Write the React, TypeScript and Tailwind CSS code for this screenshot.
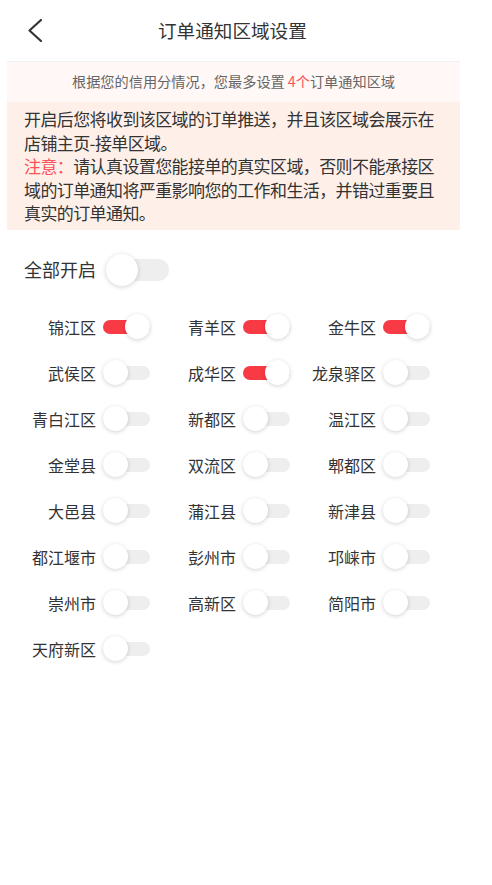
const FONT = '"Noto Sans CJK SC", "Noto Sans", sans-serif'

type Area = { name: string; on: boolean }

const AREAS: Area[] = [
  { name: '锦江区', on: true },
  { name: '青羊区', on: true },
  { name: '金牛区', on: true },
  { name: '武侯区', on: false },
  { name: '成华区', on: true },
  { name: '龙泉驿区', on: false },
  { name: '青白江区', on: false },
  { name: '新都区', on: false },
  { name: '温江区', on: false },
  { name: '金堂县', on: false },
  { name: '双流区', on: false },
  { name: '郫都区', on: false },
  { name: '大邑县', on: false },
  { name: '蒲江县', on: false },
  { name: '新津县', on: false },
  { name: '都江堰市', on: false },
  { name: '彭州市', on: false },
  { name: '邛崃市', on: false },
  { name: '崇州市', on: false },
  { name: '高新区', on: false },
  { name: '简阳市', on: false },
  { name: '天府新区', on: false },
]

function SmallSwitch({ on }: { on: boolean }) {
  return (
    <div className="relative flex h-[25px] w-[47px] items-center">
      <div className={`h-[14px] w-full rounded-full ${on ? 'bg-[#f83a45]' : 'bg-[#eeeeee]'}`} />
      <div
        className={`absolute top-0 h-[25px] w-[25px] rounded-full bg-white shadow-[0_1px_4px_rgba(0,0,0,0.18)] ${
          on ? 'right-0' : 'left-0'
        }`}
      />
    </div>
  )
}

export default function App() {
  return (
    <div className="h-[885px] w-[492px] bg-white text-[#333]" style={{ fontFamily: FONT }}>
      <div className="flex h-[61px] items-center">
        <svg width="20" height="28" viewBox="0 0 20 28" className="ml-[25px]">
          <path d="M16 3 L4.5 13.5 L16 24" fill="none" stroke="#333" strokeWidth="2.2" strokeLinecap="round" strokeLinejoin="round" />
        </svg>
        <div className="ml-[113px] text-[18.6px] leading-none text-[#333]">订单通知区域设置</div>
      </div>

      <div className="ml-[7px] w-[453px]">
        <div className="flex h-[41px] items-center justify-center border-t border-[#f0f0f0] bg-[#fff8f6] text-[14.2px] text-[#666]">
          根据您的信用分情况，您最多设置<span className="ml-[3px] text-[#fb5158]">4个</span>订单通知区域
        </div>
        <div className="bg-[#fef0e9] px-[17px] py-[5px] text-[17px] leading-[23.5px] tracking-[-0.6px] text-[#333]">
          <p>开启后您将收到该区域的订单推送，并且该区域会展示在店铺主页-接单区域。</p>
          <p>
            <span className="text-[#fb5158]">注意：</span>请认真设置您能接单的真实区域，否则不能承接区域的订单通知将严重影响您的工作和生活，并错过重要且真实的订单通知。
          </p>
        </div>
      </div>

      <div className="mt-[17px] flex h-[46px] items-center pl-[24px]">
        <span className="text-[18px] text-[#333]">全部开启</span>
        <div className="relative ml-[10px] flex h-[32px] w-[63px] items-center">
          <div className="ml-[3px] h-[22px] w-[60px] rounded-full bg-[#eeeeee]" />
          <div className="absolute left-0 top-0 h-[32px] w-[32px] rounded-full bg-white shadow-[0_1px_5px_rgba(0,0,0,0.18)]" />
        </div>
      </div>

      <div className="mt-[11px] grid grid-cols-[140px_140px_140px] pl-[10px]">
        {AREAS.map((a) => (
          <div key={a.name} className="flex h-[46px] items-center justify-end gap-[7px]">
            <span className="text-[16px] text-[#333]">{a.name}</span>
            <SmallSwitch on={a.on} />
          </div>
        ))}
      </div>
    </div>
  )
}
